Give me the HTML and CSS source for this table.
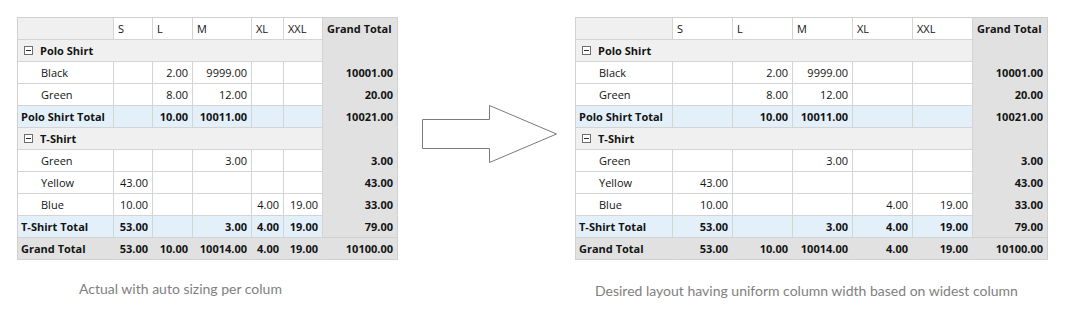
FILE: index.html
```html
<!DOCTYPE html>
<html>
<head>
<meta charset="utf-8">
<link rel="stylesheet" href="styles.css">
</head>
<body>
<div class="page">
  <div class="panel">
    <div class="pivot auto">
      <div class="c corner"></div><div class="c hd">S</div><div class="c hd">L</div><div class="c hd">M</div><div class="c hd">XL</div><div class="c hd">XXL</div><div class="c gt hd b">Grand Total</div>
      <div class="c grp"><svg class="tog" width="9" height="9" viewBox="0 0 9 9"><rect x="0.5" y="0.5" width="8" height="8" fill="#fff" stroke="#6e6e6e"/><path d="M2 4.5h5" stroke="#2a2a2a"/></svg>Polo Shirt</div><div class="c gt"></div>
      <div class="c lbl">Black</div><div class="c"></div><div class="c num">2.00</div><div class="c num">9999.00</div><div class="c"></div><div class="c"></div><div class="c gt num b">10001.00</div>
      <div class="c lbl">Green</div><div class="c"></div><div class="c num">8.00</div><div class="c num">12.00</div><div class="c"></div><div class="c"></div><div class="c gt num b">20.00</div>
      <div class="c sub b sl">Polo Shirt Total</div><div class="c sub"></div><div class="c sub num b">10.00</div><div class="c sub num b">10011.00</div><div class="c sub"></div><div class="c sub"></div><div class="c gt num b">10021.00</div>
      <div class="c grp"><svg class="tog" width="9" height="9" viewBox="0 0 9 9"><rect x="0.5" y="0.5" width="8" height="8" fill="#fff" stroke="#6e6e6e"/><path d="M2 4.5h5" stroke="#2a2a2a"/></svg>T-Shirt</div><div class="c gt"></div>
      <div class="c lbl">Green</div><div class="c"></div><div class="c"></div><div class="c num">3.00</div><div class="c"></div><div class="c"></div><div class="c gt num b">3.00</div>
      <div class="c lbl">Yellow</div><div class="c num">43.00</div><div class="c"></div><div class="c"></div><div class="c"></div><div class="c"></div><div class="c gt num b">43.00</div>
      <div class="c lbl">Blue</div><div class="c num">10.00</div><div class="c"></div><div class="c"></div><div class="c num">4.00</div><div class="c num">19.00</div><div class="c gt num b">33.00</div>
      <div class="c sub b sl">T-Shirt Total</div><div class="c sub num b">53.00</div><div class="c sub"></div><div class="c sub num b">3.00</div><div class="c sub num b">4.00</div><div class="c sub num b">19.00</div><div class="c gt num b sep">79.00</div>
      <div class="c tot b sl">Grand Total</div><div class="c tot num b">53.00</div><div class="c tot num b">10.00</div><div class="c tot num b">10014.00</div><div class="c tot num b">4.00</div><div class="c tot num b">19.00</div><div class="c gt tot-end num b">10100.00</div>
    </div>
    <p class="caption cap-left">Actual with auto sizing per colum</p>
  </div>

  <svg class="arrow" width="177" height="242" viewBox="0 0 177 242">
    <polygon points="24.5,102.5 91.5,102.5 91.5,88.5 158.5,117 91.5,145.5 91.5,131.5 24.5,131.5" fill="#fff" stroke="#7a7a7a" stroke-width="1"/>
  </svg>

  <div class="panel">
    <div class="pivot uniform">
      <div class="c corner"></div><div class="c hd">S</div><div class="c hd">L</div><div class="c hd">M</div><div class="c hd">XL</div><div class="c hd">XXL</div><div class="c gt hd b">Grand Total</div>
      <div class="c grp"><svg class="tog" width="9" height="9" viewBox="0 0 9 9"><rect x="0.5" y="0.5" width="8" height="8" fill="#fff" stroke="#6e6e6e"/><path d="M2 4.5h5" stroke="#2a2a2a"/></svg>Polo Shirt</div><div class="c gt"></div>
      <div class="c lbl">Black</div><div class="c"></div><div class="c num">2.00</div><div class="c num">9999.00</div><div class="c"></div><div class="c"></div><div class="c gt num b">10001.00</div>
      <div class="c lbl">Green</div><div class="c"></div><div class="c num">8.00</div><div class="c num">12.00</div><div class="c"></div><div class="c"></div><div class="c gt num b">20.00</div>
      <div class="c sub b sl">Polo Shirt Total</div><div class="c sub"></div><div class="c sub num b">10.00</div><div class="c sub num b">10011.00</div><div class="c sub"></div><div class="c sub"></div><div class="c gt num b">10021.00</div>
      <div class="c grp"><svg class="tog" width="9" height="9" viewBox="0 0 9 9"><rect x="0.5" y="0.5" width="8" height="8" fill="#fff" stroke="#6e6e6e"/><path d="M2 4.5h5" stroke="#2a2a2a"/></svg>T-Shirt</div><div class="c gt"></div>
      <div class="c lbl">Green</div><div class="c"></div><div class="c"></div><div class="c num">3.00</div><div class="c"></div><div class="c"></div><div class="c gt num b">3.00</div>
      <div class="c lbl">Yellow</div><div class="c num">43.00</div><div class="c"></div><div class="c"></div><div class="c"></div><div class="c"></div><div class="c gt num b">43.00</div>
      <div class="c lbl">Blue</div><div class="c num">10.00</div><div class="c"></div><div class="c"></div><div class="c num">4.00</div><div class="c num">19.00</div><div class="c gt num b">33.00</div>
      <div class="c sub b sl">T-Shirt Total</div><div class="c sub num b">53.00</div><div class="c sub"></div><div class="c sub num b">3.00</div><div class="c sub num b">4.00</div><div class="c sub num b">19.00</div><div class="c gt num b sep">79.00</div>
      <div class="c tot b sl">Grand Total</div><div class="c tot num b">53.00</div><div class="c tot num b">10.00</div><div class="c tot num b">10014.00</div><div class="c tot num b">4.00</div><div class="c tot num b">19.00</div><div class="c gt tot-end num b">10100.00</div>
    </div>
    <p class="caption cap-right">Desired layout having uniform column width based on widest column</p>
  </div>
</div>
</body>
</html>
```

FILE: styles.css
```css
html, body {
  margin: 0;
  padding: 0;
  background: #ffffff;
}

.page {
  display: flex;
  align-items: flex-start;
  padding: 17px 0 0 17px;
}

.panel {
  display: flex;
  flex-direction: column;
}

.pivot {
  display: grid;
  grid-auto-rows: 22px;
  border-top: 1px solid #d0d0d0;
  border-left: 1px solid #d0d0d0;
  font-family: "Open Sans", "Noto Sans", sans-serif;
  font-size: 11px;
  color: #141414;
}

.pivot.auto {
  grid-template-columns: 96px 39px 40px 59px 32px 39px 75px;
}

.pivot.uniform {
  grid-template-columns: 97px 60px 60px 60px 60px 60px 75px;
}

.c {
  box-sizing: border-box;
  height: 22px;
  display: flex;
  align-items: center;
  border-right: 1px solid #d4d4d4;
  border-bottom: 1px solid #d4d4d4;
  background: #ffffff;
  white-space: nowrap;
  overflow: hidden;
  padding: 0 4px;
}

.b {
  font-weight: 700;
}

.corner {
  background: #f0f0f0;
}

.hd {
  padding-left: 4px;
}

.num {
  justify-content: flex-end;
  padding-right: 4px;
}

.lbl {
  padding-left: 23px;
}

.sl {
  padding-left: 3px;
}

.grp {
  grid-column: span 6;
  background: #f0f0f0;
  font-weight: 700;
  padding-left: 6px;
}

.tog {
  flex: none;
  margin-right: 7px;
}

.sub {
  background: #e3eff9;
}

.gt {
  background: #e1e1e1;
  border-bottom-color: #e1e1e1;
  border-right-color: #d0d0d0;
}

.gt.sep {
  border-bottom-color: #d0d0d0;
}

.tot {
  background: #e1e1e1;
  border-right-color: #e1e1e1;
  border-bottom-color: #d0d0d0;
}

.gt.tot-end {
  border-bottom-color: #d0d0d0;
}

.arrow {
  flex: none;
  display: block;
}

.caption {
  margin: 0;
  font-family: Lato, "Open Sans", sans-serif;
  font-size: 14px;
  line-height: 16px;
  color: #7f7f7f;
}

.cap-left {
  margin-top: 21px;
  padding-left: 62px;
}

.cap-right {
  margin-top: 23px;
  padding-left: 20px;
}
```
